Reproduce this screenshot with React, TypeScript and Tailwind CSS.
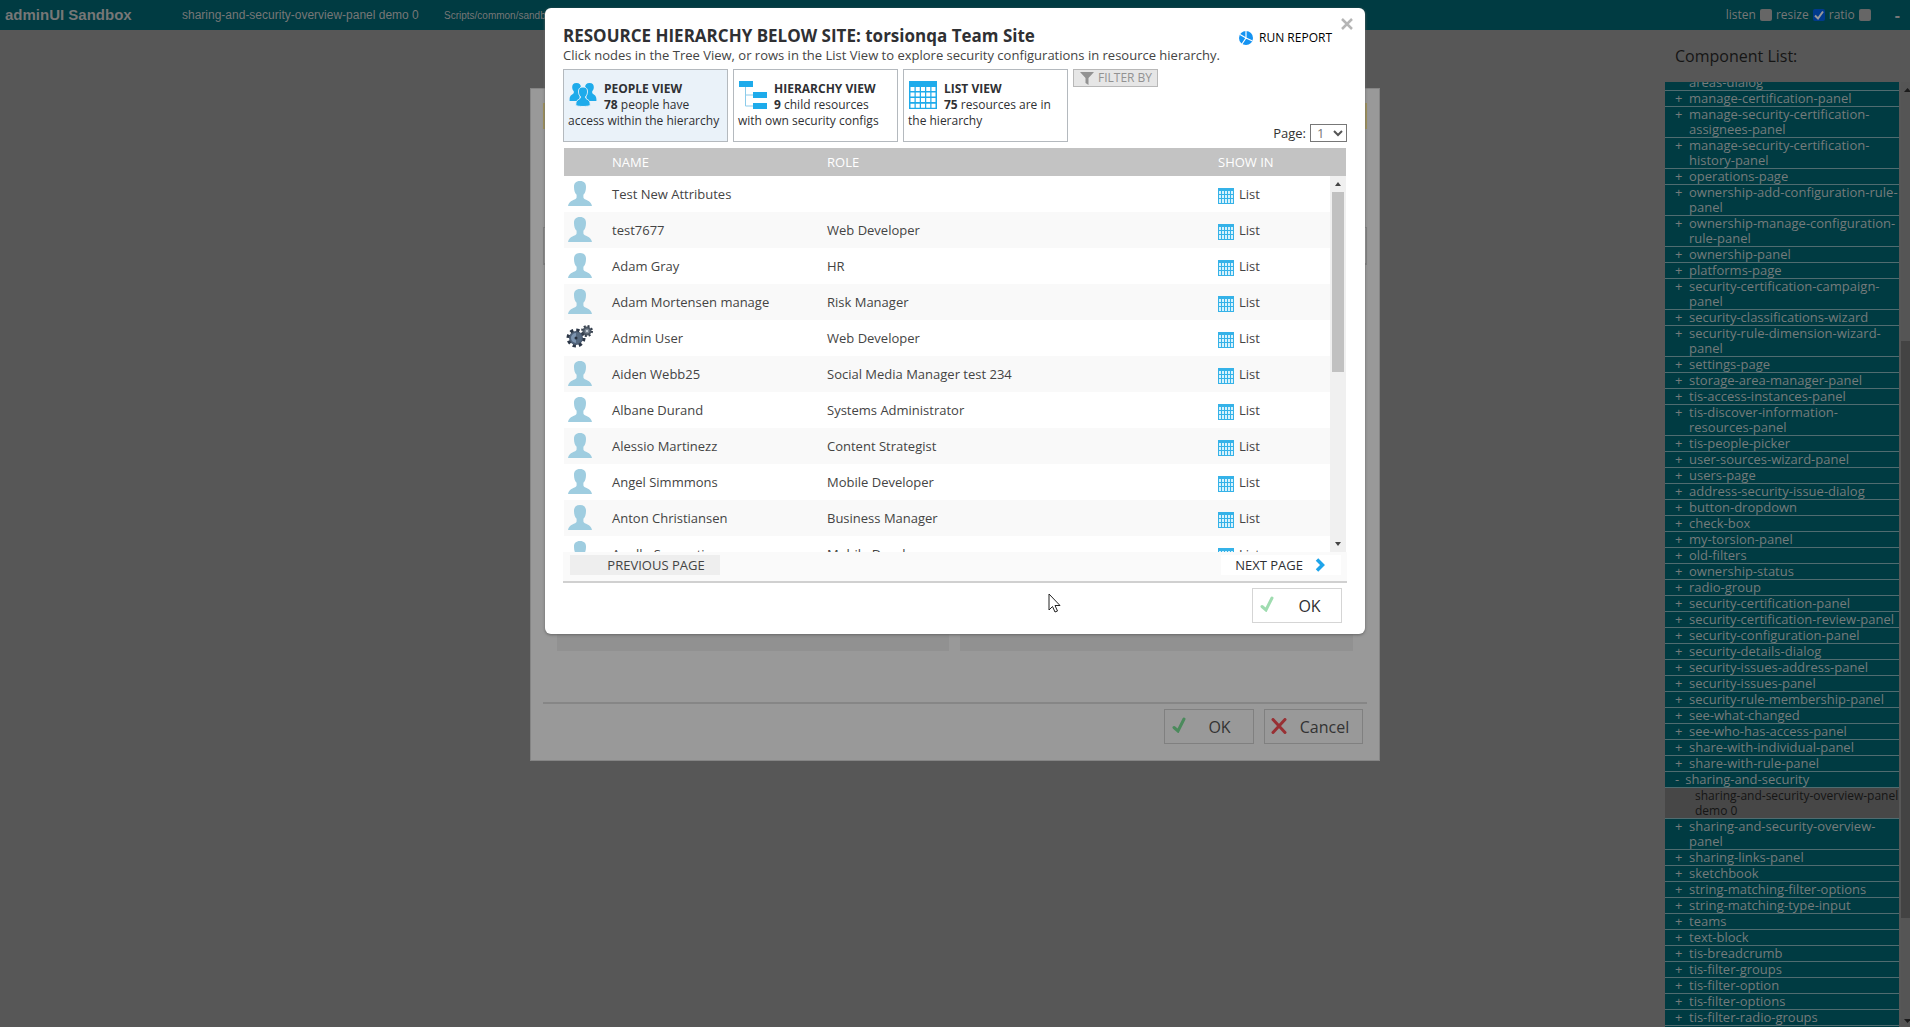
import React from "react";

type Person = { name: string; role: string; admin?: boolean };

const people: Person[] = [
  { name: "Test New Attributes", role: "" },
  { name: "test7677", role: "Web Developer" },
  { name: "Adam Gray", role: "HR" },
  { name: "Adam Mortensen manage", role: "Risk Manager" },
  { name: "Admin User", role: "Web Developer", admin: true },
  { name: "Aiden Webb25", role: "Social Media Manager test 234" },
  { name: "Albane Durand", role: "Systems Administrator" },
  { name: "Alessio Martinezz", role: "Content Strategist" },
  { name: "Angel Simmmons", role: "Mobile Developer" },
  { name: "Anton Christiansen", role: "Business Manager" },
  { name: "Apollo Serpenti", role: "Mobile Developer" },
];

const before = [
  "areas-dialog",
  "manage-certification-panel",
  "manage-security-certification-assignees-panel",
  "manage-security-certification-history-panel",
  "operations-page",
  "ownership-add-configuration-rule-panel",
  "ownership-manage-configuration-rule-panel",
  "ownership-panel",
  "platforms-page",
  "security-certification-campaign-panel",
  "security-classifications-wizard",
  "security-rule-dimension-wizard-panel",
  "settings-page",
  "storage-area-manager-panel",
  "tis-access-instances-panel",
  "tis-discover-information-resources-panel",
  "tis-people-picker",
  "user-sources-wizard-panel",
  "users-page",
  "address-security-issue-dialog",
  "button-dropdown",
  "check-box",
  "my-torsion-panel",
  "old-filters",
  "ownership-status",
  "radio-group",
  "security-certification-panel",
  "security-certification-review-panel",
  "security-configuration-panel",
  "security-details-dialog",
  "security-issues-address-panel",
  "security-issues-panel",
  "security-rule-membership-panel",
  "see-what-changed",
  "see-who-has-access-panel",
  "share-with-individual-panel",
  "share-with-rule-panel",
];

const after = [
  "sharing-and-security-overview-panel",
  "sharing-links-panel",
  "sketchbook",
  "string-matching-filter-options",
  "string-matching-type-input",
  "teams",
  "text-block",
  "tis-breadcrumb",
  "tis-filter-groups",
  "tis-filter-option",
  "tis-filter-options",
  "tis-filter-radio-groups",
];

function PersonIcon() {
  return (
    <svg viewBox="0 0 24 25" className="h-[25px] w-6" fill="#9fcde0" aria-hidden="true">
      <path d="M12 0C7.800 0 5.800 2.400 6 6.200c0 3.200 1 6 2.600 7.600v2.700C8 19.500 1 18.600 0 25h24c-1-6.400-8-5.500-8.600-8.500v-2.700C17 12.200 18 9.400 18 6.200 18.200 2.400 16.200 0 12 0z" />
    </svg>
  );
}

function GearsIcon() {
  return (
    <svg viewBox="0 0 28 26" className="h-[26px] w-7" aria-hidden="true">
      <circle cx="10" cy="14" r="6" fill="#7c94b0" stroke="#4f6178" strokeWidth="2" />
      <circle cx="10" cy="14" r="8" fill="none" stroke="#2c3747" strokeWidth="3" strokeDasharray="3.300 2.983" />
      <path d="M10 8.500a5.500 5.500 0 0 1 0 11z" fill="#56697f" />
      <circle cx="10" cy="14" r="1.500" fill="#26303e" />
      <circle cx="21" cy="7" r="3.500" fill="#7d8794" stroke="#4d5865" strokeWidth="2" />
      <circle cx="21" cy="7" r="5" fill="none" stroke="#38424f" strokeWidth="2" strokeDasharray="2 1.927" />
      <circle cx="21" cy="7" r="1" fill="#dde4ec" />
    </svg>
  );
}

function PeopleIcon() {
  return (
    <svg viewBox="0 0 28 26" className="h-[26px] w-7" fill="#1eabeb" aria-hidden="true">
      <path d="M7.500 2C4.300 2 3 4 3.200 6.500c.1 1.700.8 3 1.600 3.800v1.700C4 13.800.8 13.500.6 18v2h10V9.500c.6-1 1.200-2 1.200-3.400C12 3.800 10.500 2 7.500 2z" />
      <path d="M20.500 2c3.200 0 4.500 2 4.300 4.500-.1 1.700-.8 3-1.600 3.800v1.700c.8 1.800 4 1.500 4.200 6v2h-10V9.500c-.6-1-1.200-2-1.200-3.400C16 3.800 17.500 2 20.500 2z" />
      <path
        d="M14 6c-3.500 0-4.700 2.300-4.500 5.200.1 1.900.9 3.400 1.900 4.300v1.300C10.600 18.700 7 18.500 6.800 23v1.500c2 1.300 12.400 1.300 14.400 0V23c-.2-4.500-3.800-4.300-4.600-6.200v-1.300c1-.9 1.800-2.400 1.900-4.300C18.700 8.300 17.500 6 14 6z"
        stroke="#eaf2f9"
        strokeWidth="1"
      />
    </svg>
  );
}

function TreeIcon() {
  return (
    <svg viewBox="0 0 28 28" className="size-7" aria-hidden="true">
      <path d="M6.500 6v19H14M6.500 14H14" fill="none" stroke="#8ccbea" strokeWidth="1" />
      <path d="M0 0h14v6H0zM14 11h14v6H14zM14 22h14v6H14z" fill="#1eabeb" />
    </svg>
  );
}

function GridIcon({ small }: { small?: boolean }) {
  return small ? (
    <svg viewBox="0 0 16 16" className="size-4" aria-hidden="true">
      <path d="M0 0h16v16H0z" fill="#35b2e8" />
      <path
        d="M1 3h2v3H1zM4 3h2v3H4zM7 3h2v3H7zM10 3h2v3h-2zM13 3h2v3h-2zM1 7h2v3H1zM4 7h2v3H4zM7 7h2v3H7zM10 7h2v3h-2zM13 7h2v3h-2zM1 11h2v4H1zM4 11h2v4H4zM7 11h2v4H7zM10 11h2v4h-2zM13 11h2v4h-2z"
        fill="#d6f2fd"
      />
    </svg>
  ) : (
    <svg viewBox="0 0 28 28" className="size-7" aria-hidden="true">
      <path d="M0 0h28v28H0z" fill="#1eabeb" />
      <path
        d="M1.500 8h25M1.500 13.500h25M1.500 19h25M1.500 24.700h25"
        fill="none"
        stroke="#fff"
        strokeWidth="4"
        strokeDasharray="4 1.250"
      />
    </svg>
  );
}

function Tick({ color }: { color: string }) {
  return (
    <svg viewBox="0 0 14 16" className="mb-1 h-4 w-3.5" aria-hidden="true">
      <path d="M2 10.500l4 3.500L12 2" fill="none" stroke={color} strokeWidth="3" strokeLinecap="round" />
    </svg>
  );
}

function Row({ label }: { label: string }) {
  return (
    <li>
      <button className="flex w-full gap-2 border-b border-[#506c70] bg-[#003b42] pl-2.5 text-left text-[13px] leading-[15px]">
        <span className="w-1.5 shrink-0">+</span>
        <span>{label}</span>
      </button>
    </li>
  );
}

function ViewCard({
  icon,
  title,
  count,
  text,
  active,
}: {
  icon: React.ReactNode;
  title: string;
  count: string;
  text: string;
  active?: boolean;
}) {
  return (
    <button
      className={
        "block h-[73px] w-[165px] border border-[#b4b9be] px-1 pt-[11px] pb-3 text-left text-xs leading-4 " +
        (active ? "bg-[#eaf2f9]" : "bg-white")
      }
    >
      <span className="float-left mr-[7px] ml-px">{icon}</span>
      <b className="block font-bold">{title}</b>
      <b className="font-bold">{count}</b> {text}
    </button>
  );
}

export default function App() {
  return (
    <div className="relative flex h-screen flex-col overflow-hidden bg-[#575757] font-['Open_Sans',sans-serif] text-[#2f3033]">
      <header className="flex h-[30px] shrink-0 items-center bg-[#003b42] whitespace-nowrap text-[#777]">
        <h1 className="w-[182px] pl-[5px] font-['Liberation_Sans',sans-serif] text-[15px] font-bold">adminUI Sandbox</h1>
        <span className="w-[262px] font-['Liberation_Sans',sans-serif] text-xs">sharing-and-security-overview-panel demo 0</span>
        <span className="grow font-['Liberation_Sans',sans-serif] text-[10px]">Scripts/common/sandbox</span>
        <div className="flex items-center gap-1 text-xs">
          <label className="flex items-center gap-1">
            listen <input type="checkbox" className="size-3 appearance-none rounded-xs bg-[#666]" />
          </label>
          <label className="flex items-center gap-1">
            resize
            <span className="relative flex">
              <input type="checkbox" defaultChecked className="size-3 appearance-none rounded-xs bg-[#003a8c]" />
              <svg viewBox="0 0 12 12" className="pointer-events-none absolute inset-0 size-3" aria-hidden="true">
                <path d="M2 6.500l3 3 5-7" fill="none" stroke="#999" strokeWidth="2" />
              </svg>
            </span>
          </label>
          <label className="flex items-center gap-1">
            ratio <input type="checkbox" className="size-3 appearance-none rounded-xs bg-[#666]" />
          </label>
        </div>
        <button className="mr-2.5 ml-6 text-base font-bold" aria-label="Collapse">-</button>
      </header>

      <div className="flex min-h-0 grow justify-end">
        <aside className="flex w-[245px] flex-col">
          <h2 className="shrink-0 pt-[15px] pb-[15px] pl-2.5 text-base leading-[22px] text-[#151515]">Component List:</h2>
          <div className="flex min-h-0 grow">
            <ul className="w-[234px] overflow-hidden text-[#757b7c]">
              <li className="-mt-[7px] border-b border-[#506c70] bg-[#003b42] pl-6 text-[13px] leading-[15px]">{before[0]}</li>
              {before.slice(1).map((b) => (
                <Row key={b} label={b} />
              ))}
              <li>
                <button className="flex w-full gap-1.5 border-b border-[#506c70] bg-[#003b42] pl-2.5 text-left text-[13px] leading-[15px]">
                  <span>-</span>
                  <span>sharing-and-security</span>
                </button>
              </li>
              <li className="border-b border-[#506c70] bg-[#474747]">
                <button className="block pl-[30px] text-left text-xs leading-[15px] text-[#151515]">
                  sharing-and-security-overview-panel demo 0
                </button>
              </li>
              {after.map((b) => (
                <Row key={b} label={b} />
              ))}
              <li className="h-2 bg-[#003b42]" />
            </ul>
            <div className="ml-0.5 flex grow flex-col justify-between overflow-hidden bg-[#555]">
              <svg viewBox="0 0 9 18" className="h-[18px] w-[9px]" fill="#1b1b1b" aria-hidden="true">
                <path d="M3 10l3.500-4L10 10z" />
              </svg>
              <div className="mt-[241px] mb-auto h-[577px] bg-[#434343]" />
              <svg viewBox="0 0 9 12" className="h-3 w-[9px]" fill="#1b1b1b" aria-hidden="true">
                <path d="M3 4h7L6.500 8z" />
              </svg>
            </div>
          </div>
        </aside>
      </div>

      <div className="absolute inset-x-0 top-[88px] flex justify-center">
        <section className="flex h-[673px] w-[850px] flex-col border border-[#858585] bg-[#999] px-3 pt-3.5 text-[#333]" aria-label="Sharing and security">
          <div className="h-[26px] border border-[#a39355] bg-[#9c925f]" />
          <div className="mt-[98px] h-[38px] border border-b-2 border-[#808080]" />
          <div className="mt-auto flex justify-between px-3.5">
            <div className="h-8 w-[392px] bg-[#919191]" />
            <div className="h-8 w-[393px] bg-[#919191]" />
          </div>
          <div className="mt-[51px] flex shrink-0 justify-end gap-2.5 border-t-2 border-[#868686] pt-[5px] pr-1 pb-4">
            <button className="flex h-[35px] w-[90px] items-center border border-[#808080] pl-[7px] text-base">
              <Tick color="#4b8a5c" />
              <span className="grow text-center">OK</span>
            </button>
            <button className="flex h-[35px] w-[99px] items-center border border-[#808080] pl-1.5 text-base">
              <svg viewBox="0 0 16 16" className="mb-0.5 size-4" aria-hidden="true">
                <path d="M2 1.500l12 13M14 1.500l-12 13" stroke="#983034" strokeWidth="3" strokeLinecap="round" />
              </svg>
              <span className="grow text-center">Cancel</span>
            </button>
          </div>
        </section>
      </div>

      <div className="absolute inset-x-0 top-2 flex justify-center">
        <section
          role="dialog"
          aria-labelledby="dialog-title"
          className="relative w-[820px] rounded-md bg-white px-[18px] pt-[15px] pb-[11px] shadow-[0_1px_3px_#666]"
        >
          <button className="absolute top-2.5 right-3 flex size-3" aria-label="Close">
            <svg viewBox="0 0 12 12" className="size-3" aria-hidden="true">
              <path d="M1 1l10 10M11 1L1 11" stroke="#b5b5b5" strokeWidth="2.500" />
            </svg>
          </button>
          <div className="flex items-start justify-between">
            <div>
              <h2 id="dialog-title" className="text-[17px] leading-[25px] font-bold">
                RESOURCE HIERARCHY BELOW SITE: torsionqa Team Site
              </h2>
              <p className="text-[13px] leading-[15px] text-[#444]">
                Click nodes in the Tree View, or rows in the List View to explore security configurations in resource hierarchy.
              </p>
            </div>
            <button className="mt-[5px] mr-[15px] flex shrink-0 items-center gap-1.5 text-xs leading-5 whitespace-nowrap text-black">
              <svg viewBox="0 0 14 14" className="size-3.5" aria-hidden="true">
                <circle cx="7" cy="7" r="7" fill="#1593f2" />
                <path d="M7 0v7L1 3.500M7 7l6.500 3M7 7L3 13" fill="none" stroke="#fff" strokeWidth="1.200" />
              </svg>
              RUN REPORT
            </button>
          </div>

          <div className="mt-1.5 flex items-start gap-[5px]">
            <ViewCard icon={<PeopleIcon />} title="PEOPLE VIEW" count="78" text="people have access within the hierarchy" active />
            <ViewCard icon={<TreeIcon />} title="HIERARCHY VIEW" count="9" text="child resources with own security configs" />
            <ViewCard icon={<GridIcon />} title="LIST VIEW" count="75" text="resources are in the hierarchy" />
            <button className="flex h-[18px] w-[85px] items-center gap-1 border border-[#b8b8b8] bg-[#e6e6e6] pl-1.5 text-xs leading-4 text-[#929292]">
              <svg viewBox="0 0 14 13" className="h-[13px] w-3.5" aria-hidden="true">
                <path d="M0 0h14L8.500 6v7L5.500 11V6z" fill="#929292" />
              </svg>
              FILTER BY
            </button>
            <label className="ml-auto flex items-center gap-1 self-end text-[13px] leading-[18px] text-[#333]">
              Page:
              <span className="relative flex">
                <select className="h-[18px] w-[37px] appearance-none border border-[#777] pl-1.5 text-[13px] leading-4 text-[#777]">
                  <option>1</option>
                </select>
                <svg viewBox="0 0 10 8" className="pointer-events-none absolute top-[5px] right-1 h-2 w-2.5" aria-hidden="true">
                  <path d="M1 2l4 4 4-4" fill="none" stroke="#555" strokeWidth="2" />
                </svg>
              </span>
            </label>
          </div>

          <div className="relative mt-1.5 mr-px ml-px h-[404px] overflow-hidden">
            <table className="w-full table-fixed border-collapse text-left text-[13px]">
              <colgroup>
                <col className="w-12" />
                <col className="w-[215px]" />
                <col />
                <col className="w-32" />
              </colgroup>
              <thead>
                <tr className="h-7 bg-[#c3c3c3] text-white">
                  <th aria-label="Type" />
                  <th className="pt-0.5 font-normal">NAME</th>
                  <th className="pt-0.5 font-normal">ROLE</th>
                  <th className="pt-0.5 font-normal">SHOW IN</th>
                </tr>
              </thead>
              <tbody className="text-[#444]">
                {people.map((p) => (
                  <tr key={p.name} className="h-9 even:bg-[#f9f9f9]">
                    <td className={p.admin ? "pb-0.5 pl-0.5" : "pb-px pl-1"}>{p.admin ? <GearsIcon /> : <PersonIcon />}</td>
                    <td className="pt-0.5">{p.name}</td>
                    <td className="pt-0.5">{p.role}</td>
                    <td className="pt-0.5">
                      <button className="flex items-center gap-[5px]">
                        <span className="pt-0.5">
                          <GridIcon small />
                        </span>
                        List
                      </button>
                    </td>
                  </tr>
                ))}
              </tbody>
            </table>
            <div className="absolute top-7 right-0 flex h-[376px] w-4 flex-col bg-[#f0f0f0]" aria-hidden="true">
              <svg viewBox="0 0 16 16" className="size-4" fill="#444">
                <path d="M5 10l3-4 3 4z" />
              </svg>
              <div className="mx-0.5 h-[180px] bg-[#c1c1c1]" />
              <svg viewBox="0 0 16 16" className="mt-auto size-4" fill="#444">
                <path d="M5 6h6l-3 4z" />
              </svg>
            </div>
          </div>
          <div className="flex h-[31px] items-start justify-between border-b-2 border-[#d0d0d0] bg-[#fafafa] pt-[3px] pr-1.5 pl-[7px] text-[13px]">
            <button className="h-5 w-[150px] bg-[#eeeeee] pl-[22px] leading-5 text-[#444]">PREVIOUS PAGE</button>
            <button className="flex h-5 w-[120px] items-center justify-end gap-3 bg-white pr-4 leading-5">
              NEXT PAGE
              <svg viewBox="0 0 10 14" className="h-3.5 w-2.5" aria-hidden="true">
                <path d="M2 1.500L7.500 7 2 12.500" fill="none" stroke="#1ea4ea" strokeWidth="3.500" />
              </svg>
            </button>
          </div>
          <div className="flex justify-end pt-[5px] pr-[5px]">
            <button className="flex h-[35px] w-[90px] items-center border border-[#d5d5d5] pl-[7px] text-base">
              <Tick color="#9fdcb0" />
              <span className="grow pl-1 text-center">OK</span>
            </button>
          </div>
          <svg viewBox="0 0 13 20" className="pointer-events-none absolute top-[585px] left-[503px] h-5 w-[13px]" aria-hidden="true">
            <path d="M1 1v16l3.500-3.500L7 19l2.500-1-2.500-5.500h5z" fill="#fff" stroke="#222" />
          </svg>
        </section>
      </div>
    </div>
  );
}
